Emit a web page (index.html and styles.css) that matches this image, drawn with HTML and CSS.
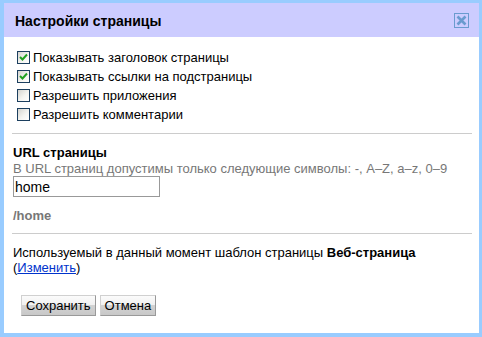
FILE: index.html
```html
<!DOCTYPE html>
<html>
	<head>
		<title>Настройки страницы</title>
		<meta charset="UTF-8">
		<link rel="stylesheet" href="styles.css">
	</head>
	<body>
		<div class="dialog">
			<div class="dialog-title">
				<span class="title-text">Настройки страницы</span>
				<span class="close-button">
					<svg width="13" height="13" viewBox="0 0 13 13">
						<path d="M2.5 2.5 L10.5 10.5 M10.5 2.5 L2.5 10.5" stroke="#6a9bcf" stroke-width="2.6" fill="none"/>
					</svg>
				</span>
			</div>

			<div class="dialog-body">
				<div class="options">
					<label class="option"><span class="box checked"><svg width="11" height="11" viewBox="0 0 11 11"><path d="M2 5 L4.5 7.5 L9 2.5" stroke="#21a121" stroke-width="2" fill="none"/></svg></span>Показывать заголовок страницы</label>
					<label class="option"><span class="box checked"><svg width="11" height="11" viewBox="0 0 11 11"><path d="M2 5 L4.5 7.5 L9 2.5" stroke="#21a121" stroke-width="2" fill="none"/></svg></span>Показывать ссылки на подстраницы</label>
					<label class="option"><span class="box"></span>Разрешить приложения</label>
					<label class="option"><span class="box"></span>Разрешить комментарии</label>
				</div>

				<hr class="divider">

				<div class="url-section">
					<div class="field-label">URL страницы</div>
					<div class="hint">В URL страниц допустимы только следующие символы: -, A–Z, a–z, 0–9</div>
					<input class="url-input" type="text" value="home">
					<div class="url-path">/home</div>
				</div>

				<hr class="divider">

				<p class="template-info">
					Используемый в данный момент шаблон страницы <b>Веб-страница</b><br>
					(<a href="#">Изменить</a>)
				</p>

				<div class="buttons">
					<button class="dialog-button">Сохранить</button>
					<button class="dialog-button">Отмена</button>
				</div>
			</div>
		</div>
	</body>
</html>
```

FILE: styles.css
```css
body {
	margin: 0;
	font-family: "Liberation Sans", Arial, sans-serif;
	font-size: 13px;
	color: #000;
	background: #fff;
}

.dialog {
	width: 475px;
	height: 330px;
	border-style: solid;
	border-color: #99ccff;
	border-width: 3px 3px 4px 4px;
	background: #fff;
	display: flex;
	flex-direction: column;
}

.dialog-title {
	height: 34px;
	background: #ccccff;
	display: flex;
	align-items: center;
	justify-content: space-between;
	padding: 0 10px 0 11px;
}

.title-text {
	font-size: 14px;
	font-weight: bold;
	padding-top: 1px;
}

.close-button {
	width: 13px;
	height: 13px;
	border: 1px solid #6a9bcf;
	display: flex;
	align-items: center;
	justify-content: center;
}

.dialog-body {
	padding: 11px 7px 0 9px;
}

.options {
	display: flex;
	flex-direction: column;
}

.option {
	height: 19px;
	display: flex;
	align-items: center;
	line-height: 19px;
}

.box {
	width: 11px;
	height: 11px;
	border: 1px solid #1c3f5f;
	background: linear-gradient(135deg, #d4d4cf 0%, #f4f4f0 55%, #fff 100%);
	margin: 0 3px 0 4px;
	display: flex;
	align-items: center;
	justify-content: center;
}

.divider {
	border: none;
	border-top: 1px solid #cccccc;
	margin: 9px 0 0 -1px;
	height: 0;
}

.url-section {
	padding-top: 11px;
}

.field-label {
	font-weight: bold;
	line-height: 16px;
}

.hint {
	color: #777;
	line-height: 15px;
}

.url-input {
	display: block;
	box-sizing: border-box;
	width: 147px;
	height: 21px;
	margin: 0;
	padding: 0 1px;
	border: 1px solid #999;
	font-family: "Liberation Sans", Arial, sans-serif;
	font-size: 14px;
	color: #000;
}

.url-path {
	margin-top: 11px;
	font-weight: bold;
	color: #777;
	line-height: 16px;
}

.template-info {
	margin: 11px 0 0 0;
	line-height: 15px;
}

.template-info a {
	color: #0033cc;
}

.buttons {
	display: flex;
	gap: 4px;
	margin: 20px 0 0 8px;
}

.dialog-button {
	height: 21px;
	padding: 0 4px;
	font-family: "Liberation Sans", Arial, sans-serif;
	font-size: 13px;
	color: #000;
	border: 1px solid #d0d0d0;
	border-right-color: #999;
	border-bottom-color: #999;
	background: linear-gradient(to bottom, #fbfbfb 0%, #f0f0f0 50%, #d2d2d2 50%, #c8c8c8 100%);
}
```
